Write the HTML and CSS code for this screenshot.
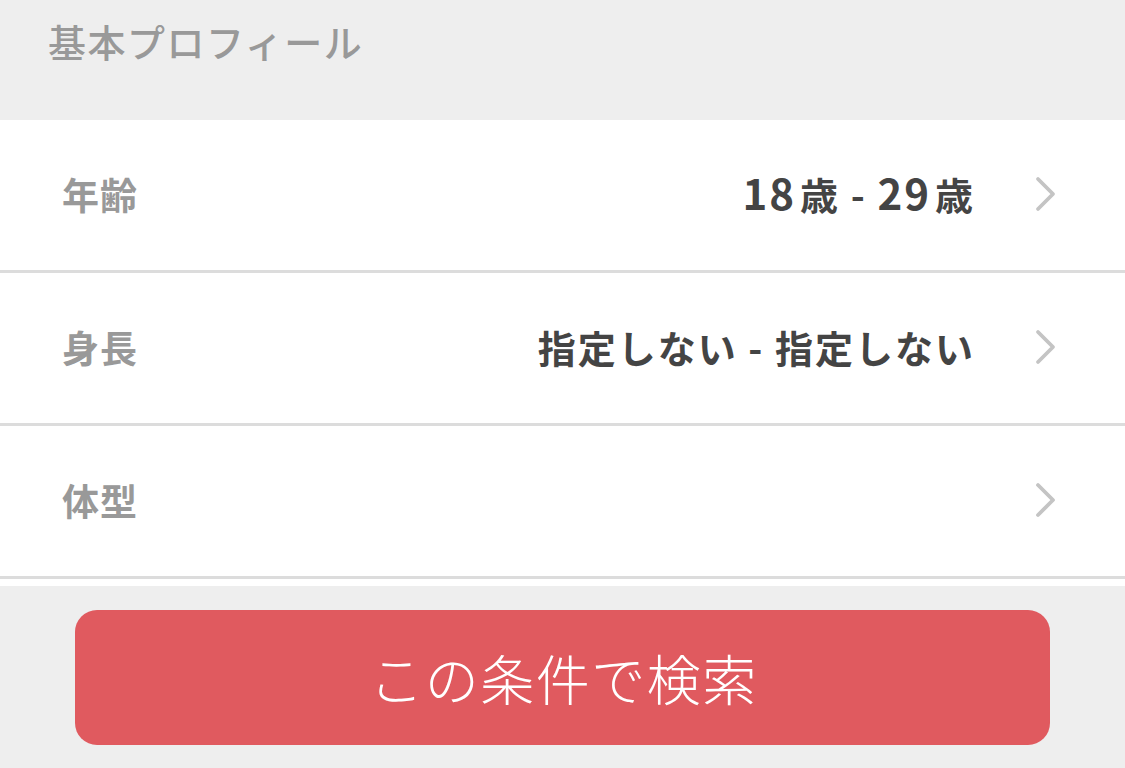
FILE: index.html
```html
<!DOCTYPE html>
<html lang="ja">
<head>
<meta charset="utf-8">
<link rel="stylesheet" href="styles.css">
</head>
<body>
<div class="page">
  <div class="section-head">基本プロフィール</div>
  <div class="list">
    <div class="row">
      <span class="label">年齢</span>
      <span class="value"><span class="num">18</span>歳 - <span class="num">29</span>歳</span>
      <svg class="chev" width="22" height="36" viewBox="0 0 22 36"><path d="M3 3 L18 18 L3 33" fill="none" stroke="#c4c4c4" stroke-width="3.8" stroke-linecap="round" stroke-linejoin="round"/></svg>
    </div>
    <div class="row">
      <span class="label">身長</span>
      <span class="value">指定しない - 指定しない</span>
      <svg class="chev" width="22" height="36" viewBox="0 0 22 36"><path d="M3 3 L18 18 L3 33" fill="none" stroke="#c4c4c4" stroke-width="3.8" stroke-linecap="round" stroke-linejoin="round"/></svg>
    </div>
    <div class="row">
      <span class="label">体型</span>
      <span class="value"></span>
      <svg class="chev" width="22" height="36" viewBox="0 0 22 36"><path d="M3 3 L18 18 L3 33" fill="none" stroke="#c4c4c4" stroke-width="3.8" stroke-linecap="round" stroke-linejoin="round"/></svg>
    </div>
    <div class="row row-cut"></div>
  </div>
  <div class="footer">
    <button class="search-btn">この条件で検索</button>
  </div>
</div>
</body>
</html>
```

FILE: styles.css
```css
* { box-sizing: border-box; }
html, body {
  margin: 0;
  padding: 0;
  width: 1125px;
  height: 768px;
  overflow: hidden;
  background: #eeeeee;
  font-family: "Noto Sans CJK JP", "Noto Sans", sans-serif;
}
.page {
  display: flex;
  flex-direction: column;
  height: 768px;
}
.section-head {
  height: 120px;
  background: #eeeeee;
  color: #999999;
  font-size: 38px;
  font-weight: 500;
  padding: 13px 0 0 48px;
  line-height: 56px;
  letter-spacing: 1.5px;
}
.list {
  background: #ffffff;
  height: 466px;
  overflow: hidden;
  display: flex;
  flex-direction: column;
}
.row {
  flex: 0 0 153px;
  display: flex;
  align-items: center;
  padding: 0 68px 3px 62px;
  border-bottom: 3px solid #dcdcdc;
}
.label {
  color: #999999;
  font-size: 37px;
  font-weight: 700;
  letter-spacing: 1px;
}
.value {
  margin-left: auto;
  color: #444444;
  font-size: 38px;
  font-weight: 700;
  letter-spacing: 2px;
  margin-right: 60px;
}
.num {
  font-size: 42px;
  line-height: 1;
  margin-right: 4px;
}
.chev {
  flex: none;
}
.footer {
  flex: 1;
  background: #eeeeee;
  padding: 24px 75px 0 75px;
}
.search-btn {
  display: block;
  width: 975px;
  height: 135px;
  border: none;
  border-radius: 22px;
  background: #e05a5f;
  color: #ffffff;
  font-family: "Noto Sans CJK JP", "Noto Sans", sans-serif;
  font-size: 54px;
  font-weight: 300;
  letter-spacing: 1.5px;
  padding: 0 0 0 2px;
}
```
